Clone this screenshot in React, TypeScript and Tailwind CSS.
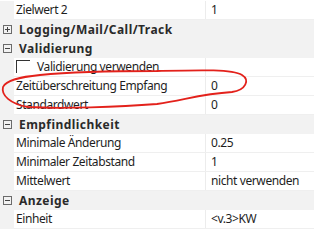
import React from "react";

type Row =
  | { kind: "cat"; label: string; open: boolean }
  | { kind: "prop"; label: string; value: string; check?: boolean };

const rows: Row[] = [
  { kind: "prop", label: "Zielwert 2", value: "1" },
  { kind: "cat", label: "Logging/Mail/Call/Track", open: false },
  { kind: "cat", label: "Validierung", open: true },
  { kind: "prop", label: "Validierung verwenden", value: "", check: true },
  { kind: "prop", label: "Zeitüberschreitung Empfang", value: "0" },
  { kind: "prop", label: "Standardwert", value: "0" },
  { kind: "cat", label: "Empfindlichkeit", open: true },
  { kind: "prop", label: "Minimale Änderung", value: "0.25" },
  { kind: "prop", label: "Minimaler Zeitabstand", value: "1" },
  { kind: "prop", label: "Mittelwert", value: "nicht verwenden" },
  { kind: "cat", label: "Anzeige", open: true },
  { kind: "prop", label: "Einheit", value: "<v.3>KW" },
];

function Expander({ open }: { open: boolean }) {
  return (
    <svg width="9" height="9" viewBox="0 0 9 9" className="shrink-0">
      <rect x="0.5" y="0.5" width="8" height="8" fill="none" stroke="#6b6b6b" strokeWidth="1" />
      <line x1="2" y1="4.5" x2="7" y2="4.5" stroke="#444" strokeWidth="1" />
      {!open && <line x1="4.5" y1="2" x2="4.5" y2="7" stroke="#444" strokeWidth="1" />}
    </svg>
  );
}

export default function App() {
  return (
    <div
      className="relative w-[314px] h-[234px] overflow-hidden bg-white text-[12px] text-[#1e1e1e]"
      style={{ fontFamily: '"Noto Sans", "Open Sans", sans-serif' }}
    >
      <div className="flex flex-col pt-[1px]">
        {rows.map((r, i) =>
          r.kind === "cat" ? (
            <div key={i} className="flex h-[19px] items-center bg-[#f2f2f2]">
              <div className="w-[19px] pl-[3px] flex items-center">
                <Expander open={r.open} />
              </div>
              <span className="font-bold leading-none tracking-[0.45px] text-[#2a2a2a]">{r.label}</span>
            </div>
          ) : (
            <div key={i} className="flex h-[19px]">
              <div className="w-[14px] bg-[#f2f2f2] shrink-0" />
              <div className="flex flex-1 border-b border-[#efefef] tracking-[-0.4px]">
                <div className="w-[192px] shrink-0 flex items-center pl-[2px] border-r border-[#ececec]">
                  {r.check ? (
                    <>
                      <span className="w-[14px] h-[13px] border-l border-t border-[#333] mt-[2px] self-start" />
                      <span className="ml-[7px] leading-none">{r.label}</span>
                    </>
                  ) : (
                    <span className="leading-none">{r.label}</span>
                  )}
                </div>
                <div className="flex items-center pl-[5px] leading-none">{r.value}</div>
              </div>
            </div>
          )
        )}
      </div>
      <svg
        className="absolute left-0 top-0 pointer-events-none"
        width="314"
        height="234"
        viewBox="0 0 314 234"
      >
        <path
          d="M 157 71 C 110 71, 70 72, 40 75 C 20 77, 6 80, 3 87 C 1 95, 10 104, 28 107 C 60 109, 120 107, 157 104 C 185 100, 200 94, 232 92 C 246 90, 250 80, 242 75 C 232 69, 200 70, 157 71"
          fill="none"
          stroke="#e3211b"
          strokeWidth="1.8"
          strokeLinecap="round"
        />
      </svg>
    </div>
  );
}
